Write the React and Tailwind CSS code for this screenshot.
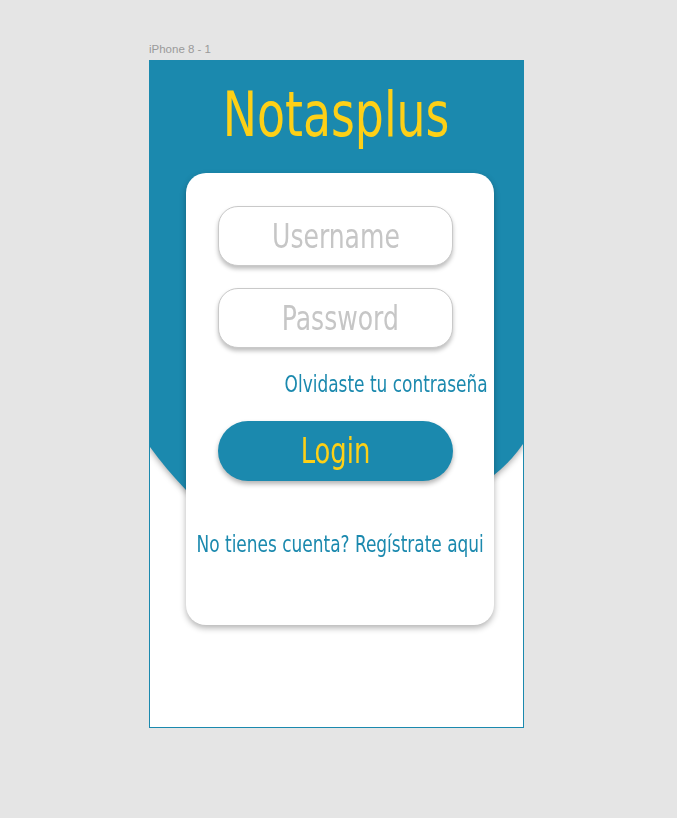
import React from 'react'

const FONT = { fontFamily: '"Liberation Sans Narrow", "DejaVu Sans Condensed", "Liberation Sans", sans-serif' }

// the mockup's font is a narrow techno face; squeeze the condensed fallback to its width
function Narrow({ children, className = '', origin = 'origin-center' }) {
  return <span className={`inline-block whitespace-nowrap scale-x-[0.82] ${origin} ${className}`}>{children}</span>
}

function BlueBackdrop() {
  return (
    <svg
      className="absolute inset-0 pointer-events-none"
      width="373"
      height="666"
      viewBox="0 0 373 666"
      style={{ filter: 'drop-shadow(0 2px 3px rgba(0,0,0,0.35))' }}
    >
      <path
        d="M0 0 H373 V383 C365 395 355 405 344 414 L186 470 L36 429 C22 414 10 400 0 386 Z"
        fill="#1b89ae"
      />
    </svg>
  )
}

function Field({ placeholder, shift }) {
  return (
    <div
      className={`h-[60px] w-[235px] rounded-[20px] border border-[#c9c9c9] bg-white shadow-[0_3px_4px_rgba(0,0,0,0.25)] flex items-center justify-center ${shift}`}
    >
      <Narrow className="text-[34px] leading-none text-[#c6c6c6]">{placeholder}</Narrow>
    </div>
  )
}

export default function App() {
  return (
    <div className="min-h-screen bg-[#e5e5e5] pl-[149px] pt-[43px] pb-[90px]" style={FONT}>
      <div
        className="h-[12px] text-[11.5px] leading-[12px] text-[#9a9a9a] mb-[5px]"
        style={{ fontFamily: '"Liberation Sans", Arial, sans-serif' }}
      >
        iPhone 8 - 1
      </div>

      {/* artboard frame: 1px blue edge */}
      <div className="w-[375px] h-[668px] bg-[#1b89ae] p-px">
        <div className="relative w-full h-full bg-white overflow-hidden">
          <BlueBackdrop />

          <div className="relative pt-[23px]">
            <h1 className="h-[62px] flex justify-center text-[62px] leading-none text-[#fdd017] font-normal">
              <Narrow>Notasplus</Narrow>
            </h1>

            <div className="mt-[27px] ml-[36px] w-[308px] h-[452px] rounded-[20px] bg-white shadow-[0_3px_6px_rgba(0,0,0,0.3)] pt-[33px]">
              <div className="ml-[32px] flex flex-col gap-[22px]">
                <Field placeholder="Username" shift="" />
                <Field placeholder="Password" shift="pl-[10px]" />
              </div>

              <div className="mt-[25px] pr-[6px] flex justify-end text-[23px] leading-none text-[#1b89ae]">
                <Narrow origin="origin-right">Olvidaste tu contraseña</Narrow>
              </div>

              <button className="mt-[25px] ml-[32px] h-[60px] w-[235px] rounded-full bg-[#1b89ae] shadow-[0_3px_5px_rgba(0,0,0,0.3)] flex items-center justify-center">
                <Narrow className="text-[35px] leading-none text-[#fdd017]">Login</Narrow>
              </button>

              <div className="mt-[52px] flex justify-center text-[23px] leading-none text-[#1b89ae]">
                <Narrow>No tienes cuenta? Regístrate aqui</Narrow>
              </div>
            </div>
          </div>
        </div>
      </div>
    </div>
  )
}
